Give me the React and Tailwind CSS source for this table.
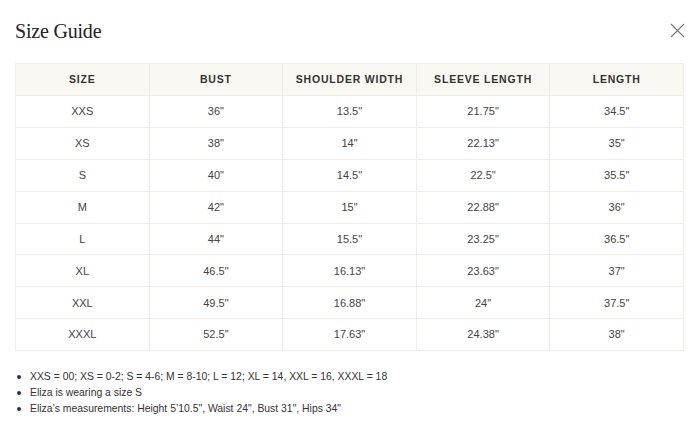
import React from 'react';

const rows = [
  ['XXS', '36"', '13.5"', '21.75"', '34.5"'],
  ['XS', '38"', '14"', '22.13"', '35"'],
  ['S', '40"', '14.5"', '22.5"', '35.5"'],
  ['M', '42"', '15"', '22.88"', '36"'],
  ['L', '44"', '15.5"', '23.25"', '36.5"'],
  ['XL', '46.5"', '16.13"', '23.63"', '37"'],
  ['XXL', '49.5"', '16.88"', '24"', '37.5"'],
  ['XXXL', '52.5"', '17.63"', '24.38"', '38"'],
];

const heads = ['SIZE', 'BUST', 'SHOULDER WIDTH', 'SLEEVE LENGTH', 'LENGTH'];

const notes = [
  'XXS = 00; XS = 0-2; S = 4-6; M = 8-10; L = 12; XL = 14, XXL = 16, XXXL = 18',
  'Eliza is wearing a size S',
  'Eliza\u2019s measurements: Height 5\u201910.5", Waist 24", Bust 31", Hips 34"',
];

export default function App() {
  return (
    <div className="w-[700px] h-[431px] bg-white font-['Liberation_Sans',Arial,sans-serif] text-[#333]">
      <div className="flex items-start justify-between pl-[15px] pr-[15px] pt-[19px] h-[63px]">
        <h1 className="font-['Liberation_Serif',serif] text-[20px] leading-[24px] text-[#222] tracking-[-0.2px]">Size Guide</h1>
        <button className="mt-[4px] text-[#777]" aria-label="Close">
          <svg width="15" height="15" viewBox="0 0 15 15" fill="none" stroke="currentColor" strokeWidth="1.1">
            <path d="M1 1L14 14M14 1L1 14" />
          </svg>
        </button>
      </div>
      <table className="ml-[15px] w-[669px] border-collapse table-fixed">
        <thead>
          <tr className="bg-[#faf8f3] h-[32px]">
            {heads.map((h) => (
              <th key={h} className="border border-[#f0ede4] text-[10.5px] font-bold tracking-[0.8px] text-[#333] text-center">
                {h}
              </th>
            ))}
          </tr>
        </thead>
        <tbody>
          {rows.map((r) => (
            <tr key={r[0]} className="h-[31.9px]">
              {r.map((c, i) => (
                <td key={i} className="border border-[#f0ede4] text-[11px] text-[#444] text-center">
                  {c}
                </td>
              ))}
            </tr>
          ))}
        </tbody>
      </table>
      <ul className="mt-[18px] pl-[17px] text-[10.4px] leading-[16px] text-[#333]">
        {notes.map((n) => (
          <li key={n} className="flex items-center">
            <span className="w-[4px] h-[4px] rounded-full bg-[#333] mr-[9px]" />
            {n}
          </li>
        ))}
      </ul>
    </div>
  );
}
